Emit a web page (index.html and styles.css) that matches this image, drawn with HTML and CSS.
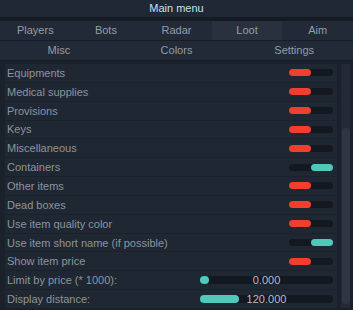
FILE: index.html
```html
<!DOCTYPE html>
<html>
<head>
    <title>Main menu</title>
    <link rel="stylesheet" href="styles.css">
</head>
<body>
    <div class="ventana">
        <div class="titulo">Main menu</div>

        <div class="pestanas">
            <div class="pestana">Players</div>
            <div class="pestana">Bots</div>
            <div class="pestana">Radar</div>
            <div class="pestana activa">Loot</div>
            <div class="pestana">Aim</div>
        </div>
        <div class="pestanas">
            <div class="pestana">Misc</div>
            <div class="pestana">Colors</div>
            <div class="pestana">Settings</div>
        </div>

        <div class="contenido">
            <ul class="lista">
                <li class="fila"><span>Equipments</span><span class="interruptor apagado"><i></i></span></li>
                <li class="fila"><span>Medical supplies</span><span class="interruptor apagado"><i></i></span></li>
                <li class="fila"><span>Provisions</span><span class="interruptor apagado"><i></i></span></li>
                <li class="fila"><span>Keys</span><span class="interruptor apagado"><i></i></span></li>
                <li class="fila"><span>Miscellaneous</span><span class="interruptor apagado"><i></i></span></li>
                <li class="fila"><span>Containers</span><span class="interruptor encendido"><i></i></span></li>
                <li class="fila"><span>Other items</span><span class="interruptor apagado"><i></i></span></li>
                <li class="fila"><span>Dead boxes</span><span class="interruptor apagado"><i></i></span></li>
                <li class="fila"><span>Use item quality color</span><span class="interruptor apagado"><i></i></span></li>
                <li class="fila"><span>Use item short name (if possible)</span><span class="interruptor encendido"><i></i></span></li>
                <li class="fila"><span>Show item price</span><span class="interruptor apagado"><i></i></span></li>
                <li class="fila">
                    <span>Limit by price (* 1000):</span>
                    <span class="deslizador"><i class="perilla"></i><b>0.000</b></span>
                </li>
                <li class="fila">
                    <span>Display distance:</span>
                    <span class="deslizador"><i class="relleno" style="width: 39px"></i><b>120.000</b></span>
                </li>
            </ul>
            <div class="barra-scroll"><div class="pulgar"></div></div>
        </div>
    </div>
</body>
</html>
```

FILE: styles.css
```css
body {
    margin: 0;
    background: #1a212b;
    font-family: "Liberation Sans", Arial, sans-serif;
    font-size: 11px;
}

.ventana {
    width: 353px;
    height: 310px;
    overflow: hidden;
    background: #1a212b;
}

.titulo {
    height: 17px;
    line-height: 17px;
    text-align: center;
    color: #c4e2ea;
    background: #1f2834;
    border-bottom: 4px solid #151b23;
}

.pestanas {
    display: flex;
    height: 19px;
    border-bottom: 1px solid #171d26;
    background: #212a36;
}

.pestana {
    flex: 1;
    line-height: 19px;
    text-align: center;
    color: #979da5;
}

.pestana.activa {
    background: #28313d;
}

/* lista con barra de desplazamiento */
.contenido {
    display: flex;
    padding: 3px 0 0 5px;
}

.lista {
    list-style: none;
    margin: 0;
    padding: 0;
    width: 332px;
}

.fila {
    display: flex;
    align-items: center;
    justify-content: space-between;
    height: 17.85px;
    margin-bottom: 1px;
    padding: 0 4px 0 2px;
    background: #1f2733;
    color: #8e949c;
}

.interruptor {
    display: flex;
    width: 44px;
    height: 7px;
    border-radius: 4px;
    background: #131821;
}

.interruptor i {
    width: 22px;
    height: 7px;
    border-radius: 4px;
}

.apagado i {
    background: #f03f2f;
}

.encendido {
    justify-content: flex-end;
}

.encendido i {
    background: #4fc9ba;
}

.deslizador {
    position: relative;
    display: flex;
    align-items: center;
    width: 133px;
    height: 8px;
    border-radius: 4px;
    background: #131821;
}

.deslizador .perilla {
    width: 9px;
    height: 8px;
    border-radius: 4px;
    background: #4fc9ba;
}

.deslizador .relleno {
    height: 8px;
    border-radius: 4px;
    background: #4fc9ba;
}

.deslizador b {
    position: absolute;
    left: 0;
    right: 0;
    top: -4px;
    line-height: 16px;
    text-align: center;
    font-weight: normal;
    color: #b9bdc2;
}

.barra-scroll {
    width: 8px;
    height: 244px;
    margin-left: 4px;
    background: #222a35;
    display: flex;
    flex-direction: column;
    justify-content: flex-end;
    padding-left: 1px;
}

.pulgar {
    height: 176px;
    margin-bottom: 4px;
    border-radius: 3px;
    background: #2e3642;
}
```
